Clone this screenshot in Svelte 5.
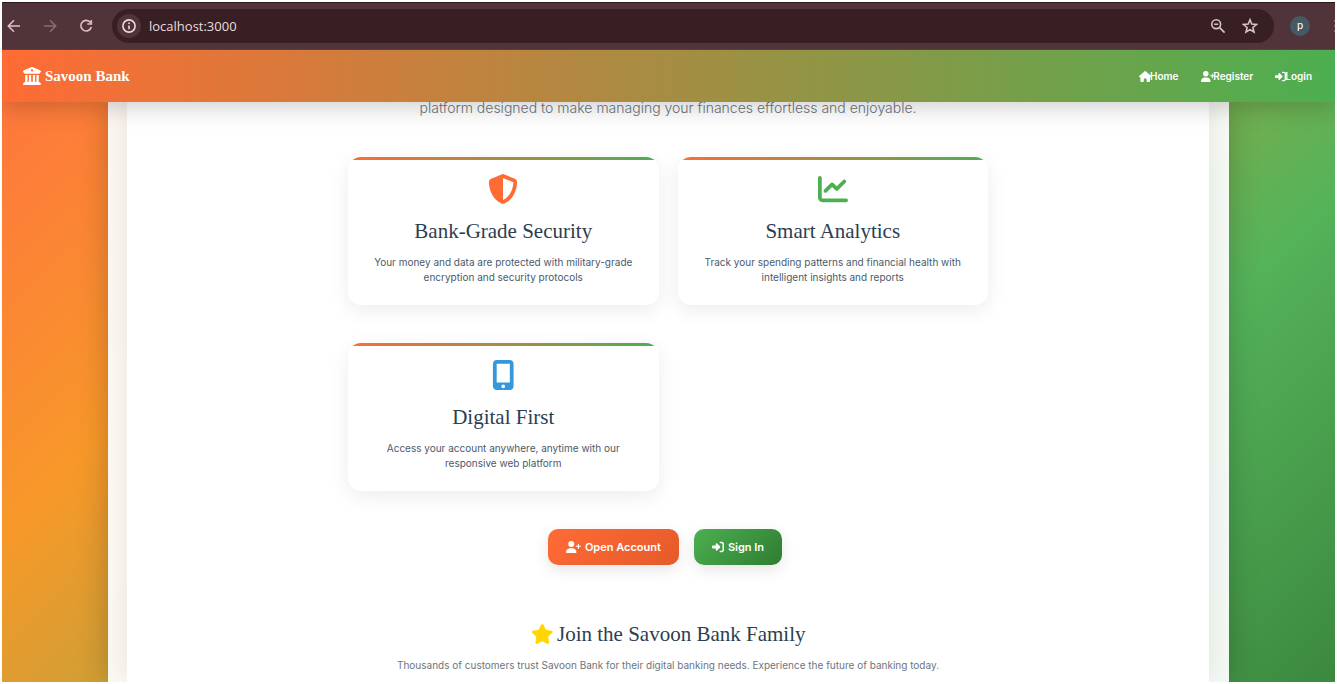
<script>
  const icons = {
    bank: { w: 512, d: 'M243.4 2.6l-224 96c-14 6-21.8 21-18.7 35.8S16.8 160 32 160v8c0 13.3 10.7 24 24 24H456c13.3 0 24-10.7 24-24v-8c15.2 0 28.3-10.7 31.3-25.6s-4.8-29.9-18.7-35.8l-224-96c-8-3.4-17.2-3.4-25.2 0zM128 224H64V420.3c-.6 .3-1.2 .7-1.8 1.1l-48 32c-11.7 7.8-17 22.4-12.9 35.9S17.9 512 32 512H480c14.1 0 26.5-9.2 30.6-22.7s-1.1-28.1-12.9-35.9l-48-32c-.6-.4-1.2-.7-1.8-1.1V224H384V416H344V224H280V416H232V224H168V416H128V224zM256 64a32 32 0 1 1 0 64 32 32 0 1 1 0-64z' },
    home: { w: 576, d: 'M575.8 255.5c0 18-15 32.1-32 32.1h-32l.7 160.2c0 2.7-.2 5.4-.5 8.1V472c0 22.1-17.9 40-40 40H456c-1.1 0-2.2 0-3.3-.1c-1.4 .1-2.8 .1-4.2 .1H416 392c-22.1 0-40-17.9-40-40V448 384c0-17.7-14.3-32-32-32H256c-17.7 0-32 14.3-32 32v64 24c0 22.1-17.9 40-40 40H160 128.1c-1.5 0-3-.1-4.5-.2c-1.2 .1-2.4 .2-3.6 .2H104c-22.1 0-40-17.9-40-40V360c0-.9 0-1.9 .1-2.8V287.6H32c-18 0-32-14-32-32.1c0-9 3-17 10-24L266.4 8c7-7 15-8 22-8s15 2 21 7L564.8 231.5c8 7 12 15 11 24z' },
    userPlus: { w: 640, d: 'M96 128a128 128 0 1 1 256 0A128 128 0 1 1 96 128zM0 482.3C0 383.8 79.8 304 178.3 304h91.4C368.2 304 448 383.8 448 482.3c0 16.4-13.3 29.7-29.7 29.7H29.7C13.3 512 0 498.7 0 482.3zM504 312V248H440c-13.3 0-24-10.7-24-24s10.7-24 24-24h64V136c0-13.3 10.7-24 24-24s24 10.7 24 24v64h64c13.3 0 24 10.7 24 24s-10.7 24-24 24H552v64c0 13.3-10.7 24-24 24s-24-10.7-24-24z' },
    login: { w: 512, d: 'M217.9 105.9L340.7 228.7c7.2 7.2 11.3 17.1 11.3 27.3s-4.1 20.1-11.3 27.3L217.9 406.1c-6.4 6.4-15 9.9-24 9.9c-18.7 0-33.9-15.2-33.9-33.9l0-62.1L32 320c-17.7 0-32-14.3-32-32l0-64c0-17.7 14.3-32 32-32l128 0 0-62.1c0-18.7 15.2-33.9 33.9-33.9c9 0 17.6 3.6 24 9.9zM352 416l64 0c17.7 0 32-14.3 32-32l0-256c0-17.7-14.3-32-32-32l-64 0c-17.7 0-32-14.3-32-32s14.3-32 32-32l64 0c53 0 96 43 96 96l0 256c0 53-43 96-96 96l-64 0c-17.7 0-32-14.3-32-32s14.3-32 32-32z' },
    shield: { w: 512, d: 'M256 0c4.6 0 9.2 1 13.4 2.9L457.7 82.8c22 9.3 38.4 31 38.3 57.2c-.5 99.2-41.3 280.7-213.6 363.2c-16.7 8-36.1 8-52.8 0C57.3 420.7 16.5 239.2 16 140c-.1-26.2 16.3-47.9 38.3-57.2L242.7 2.9C246.8 1 251.4 0 256 0zm0 66.8V444.8C394 378 431.1 230.1 432 141.4L256 66.8l0 0z' },
    chart: { w: 512, d: 'M64 64c0-17.7-14.3-32-32-32S0 46.3 0 64V400c0 44.2 35.8 80 80 80H480c17.7 0 32-14.3 32-32s-14.3-32-32-32H80c-8.8 0-16-7.2-16-16V64zm406.6 86.6c12.5-12.5 12.5-32.8 0-45.3s-32.8-12.5-45.3 0L320 210.7l-57.4-57.4c-12.5-12.5-32.8-12.5-45.3 0l-112 112c-12.5 12.5-12.5 32.8 0 45.3s32.8 12.5 45.3 0L240 221.3l57.4 57.4c12.5 12.5 32.8 12.5 45.3 0l128-128z' },
    mobile: { w: 384, d: 'M16 64C16 28.7 44.7 0 80 0H304c35.3 0 64 28.7 64 64V448c0 35.3-28.7 64-64 64H80c-35.3 0-64-28.7-64-64V64zM224 448a32 32 0 1 0 -64 0 32 32 0 1 0 64 0zM304 64H80V384H304V64z' },
    star: { w: 576, d: 'M316.9 18C311.6 7 300.4 0 288.1 0s-23.4 7-28.8 18L195 150.3 51.4 171.5c-12 1.8-22 10.2-25.7 21.7s-.7 24.2 7.9 32.7L137.8 329 113.2 474.7c-2 12 3 24.2 12.9 31.3s23 8 33.8 2.3l128.3-68.5 128.3 68.5c10.8 5.7 23.9 4.9 33.8-2.3s14.9-19.3 12.9-31.3L438.5 329 542.7 225.9c8.6-8.5 11.7-21.2 7.9-32.7s-13.7-19.9-25.7-21.7L381.2 150.3 316.9 18z' }
  };

  const links = [
    { icon: 'home', label: 'Home', href: '#home' },
    { icon: 'userPlus', label: 'Register', href: '#register' },
    { icon: 'login', label: 'Login', href: '#login' }
  ];

  const features = [
    { icon: 'shield', tone: 'orange', title: 'Bank-Grade Security', text: 'Your money and data are protected with military-grade encryption and security protocols' },
    { icon: 'chart', tone: 'green', title: 'Smart Analytics', text: 'Track your spending patterns and financial health with intelligent insights and reports' },
    { icon: 'mobile', tone: 'blue', title: 'Digital First', text: 'Access your account anywhere, anytime with our responsive web platform' }
  ];

  let address = $state('localhost:3000');
</script>

{#snippet icon(name)}
  <svg class="icon" viewBox="0 0 {icons[name].w} 512" aria-hidden="true"><path d={icons[name].d} /></svg>
{/snippet}

<div class="window">
  <div class="toolbar">
    <button class="tool" aria-label="Back">
      <svg viewBox="0 0 16 16"><path d="M14 8H2.5M8 2.3L2.3 8L8 13.7" /></svg>
    </button>
    <button class="tool dim" aria-label="Forward">
      <svg viewBox="0 0 16 16"><path d="M2 8H13.5M8 2.3L13.7 8L8 13.7" /></svg>
    </button>
    <button class="tool" aria-label="Reload">
      <svg viewBox="0 0 16 16"><path d="M12.4 4.5A5.3 5.3 0 1 0 13.3 9M13.3 2V6H9.3" /></svg>
    </button>
    <div class="omnibox">
      <button class="info" aria-label="Site information">
        <svg viewBox="0 0 16 16"><circle cx="8" cy="8" r="6.1" /><path d="M8 7.4V11.2M8 4.6V6" /></svg>
      </button>
      <input class="address" aria-label="Address" bind:value={address} />
      <button class="tool" aria-label="Zoom">
        <svg viewBox="0 0 16 16"><circle cx="6.2" cy="6.2" r="4.4" /><path d="M4.2 6.2H8.2M9.6 9.6L14.6 14.6" /></svg>
      </button>
      <button class="tool" aria-label="Bookmark">
        <svg viewBox="0 0 16 16"><path d="M8 1.8L9.8 6.1L14.4 6.5L10.9 9.5L12 14L8 11.6L4 14L5.1 9.5L1.6 6.5L6.2 6.1Z" /></svg>
      </button>
    </div>
    <button class="avatar" aria-label="Profile">p</button>
    <button class="more" aria-label="More"><i></i><i></i><i></i></button>
  </div>

  <div class="site">
    <header>
      <a class="brand" href="#home">{@render icon('bank')}Savoon Bank</a>
      <nav>
        {#each links as link}
          <a class={link.icon} href={link.href}>{@render icon(link.icon)}{link.label}</a>
        {/each}
      </nav>
    </header>

    <main>
      <div class="panel">
        <p class="lead">platform designed to make managing your finances effortless and enjoyable.</p>

        <section class="features">
          {#each features as f}
            <article class={f.tone}>
              {@render icon(f.icon)}
              <h2>{f.title}</h2>
              <p>{f.text}</p>
            </article>
          {/each}
        </section>

        <div class="actions">
          <button class="primary">{@render icon('userPlus')}Open Account</button>
          <button class="secondary">{@render icon('login')}Sign In</button>
        </div>

        <section class="join">
          <h2>{@render icon('star')}Join the Savoon Bank Family</h2>
          <p>Thousands of customers trust Savoon Bank for their digital banking needs. Experience the future of banking today.</p>
        </section>
      </div>
    </main>
  </div>
</div>

<style>
  :global(body) {
    margin: 0;
    background: #fff;
  }

  * {
    box-sizing: border-box;
  }

  .window {
    display: flex;
    flex-direction: column;
    height: 100vh;
    padding: 2px;
    overflow: hidden;
    font-family: Inter, 'Liberation Sans', sans-serif;
  }

  button {
    border: 0;
    padding: 0;
    background: none;
    font-family: inherit;
    cursor: pointer;
  }

  a {
    color: inherit;
    text-decoration: none;
  }

  h2,
  p {
    margin: 0;
  }

  .icon {
    display: block;
    flex: none;
    height: 12px;
    fill: currentColor;
  }

  /* Browser toolbar */
  .toolbar {
    display: flex;
    flex: none;
    align-items: center;
    height: 48px;
    padding-left: 4px;
    background: #50343a;
    border-top: 1px solid #2b191d;
    border-bottom: 1px solid #5a3e41;
    overflow: hidden;
  }

  .tool {
    display: flex;
    flex: none;
    width: 16px;
    height: 16px;
    margin-right: 20px;
    color: #e5bcc5;
  }

  .tool.dim {
    color: #8c6b72;
  }

  .tool svg,
  .info svg {
    width: 16px;
    height: 16px;
    fill: none;
    stroke: currentColor;
    stroke-width: 1.6;
  }

  .omnibox {
    display: flex;
    flex: 1;
    align-items: center;
    height: 34px;
    margin: 0 16px 0 -2px;
    padding-left: 5px;
    border-radius: 17px;
    background: #381f23;
  }

  .omnibox .tool {
    margin-right: 16px;
    color: #d8c2c5;
  }

  .info {
    display: flex;
    flex: none;
    align-items: center;
    justify-content: center;
    width: 24px;
    height: 24px;
    margin-right: 8px;
    border-radius: 50%;
    background: #50343a;
    color: #eadcde;
  }

  .address {
    flex: 1;
    min-width: 0;
    padding: 0;
    border: 0;
    outline: 0;
    background: none;
    color: #eadcde;
    font: 13px/20px 'Open Sans', sans-serif;
  }

  .avatar {
    flex: none;
    width: 20px;
    height: 20px;
    margin-right: 22px;
    border-radius: 50%;
    background: #455a64;
    color: #fff;
    font: 11px/18px Roboto, sans-serif;
  }

  .more {
    display: flex;
    flex: none;
    flex-direction: column;
    align-items: flex-end;
    gap: 3px;
    width: 3px;
  }

  .more i {
    width: 1px;
    height: 2px;
    background: #8c6b72;
  }

  /* Site */
  .site {
    display: flex;
    flex: 1;
    flex-direction: column;
    min-height: 0;
    overflow: hidden;
    background:
      linear-gradient(rgba(255, 255, 255, 0.05), rgba(255, 255, 255, 0.05)),
      linear-gradient(135deg, #ff6b35 0%, #f7931e 25%, #4caf50 75%, #2e7d32 103%);
  }

  header {
    position: relative;
    z-index: 1;
    display: flex;
    flex: none;
    align-items: center;
    justify-content: space-between;
    height: 52px;
    padding: 0 23px 0 21px;
    background: linear-gradient(90deg, #ff6b35, #4caf50);
    box-shadow: 0 5px 25px rgba(0, 0, 0, 0.2);
    color: #fff;
  }

  .brand {
    display: flex;
    align-items: center;
    gap: 4px;
    font: bold 15px/20px 'Liberation Serif', serif;
  }

  .brand .icon {
    height: 18px;
  }

  nav {
    display: flex;
    gap: 22px;
  }

  nav a {
    display: flex;
    align-items: center;
    font-size: 10px;
    font-weight: 600;
    line-height: 16px;
  }

  nav .icon {
    height: 11px;
    margin-right: -1px;
  }

  main {
    flex: 1;
    width: 100%;
    max-width: 1121px;
    min-height: 0;
    margin: 0 auto;
    padding: 0 20px 0 19px;
    background: rgba(255, 255, 255, 0.95);
    box-shadow: 0 0 30px rgba(0, 0, 0, 0.2);
  }

  .panel {
    display: flex;
    flex-direction: column;
    align-items: center;
    height: 100%;
    background: #fff;
    box-shadow: 0 0 30px rgba(0, 0, 0, 0.1);
    text-align: center;
  }

  .lead {
    flex: none;
    margin: -6px 0 37px;
    color: #6c757d;
    font-size: 14px;
    font-weight: 300;
    line-height: 24px;
  }

  .features {
    display: grid;
    grid-template-columns: 1fr 1fr;
    gap: 38px 19px;
    width: 100%;
    max-width: 640px;
  }

  article {
    position: relative;
    display: flex;
    flex-direction: column;
    align-items: center;
    padding: 17px 25px 20px;
    border-radius: 13px;
    background: #fff;
    box-shadow: 0 5px 20px rgba(0, 0, 0, 0.08);
    color: #4a5a6a;
  }

  article::before {
    content: '';
    position: absolute;
    inset: 0;
    border-radius: inherit;
    background: linear-gradient(90deg, #ff6b35, #4caf50) top / 100% 3px no-repeat;
  }

  article .icon {
    height: 30px;
  }

  .orange .icon {
    color: #ff6b35;
  }

  .green .icon {
    color: #4caf50;
  }

  .blue .icon {
    color: #3498db;
  }

  h2 {
    color: #2c3e50;
    font: 500 21px/26px 'Liberation Serif', serif;
  }

  article h2 {
    margin: 14px 0 11px;
  }

  article p {
    font-size: 10px;
    line-height: 15px;
  }

  .actions {
    display: flex;
    gap: 15px;
    margin: 38px 0 56px;
    padding-right: 6px;
  }

  .actions button {
    display: flex;
    align-items: center;
    gap: 4px;
    height: 36px;
    padding: 0 18px;
    border-radius: 10px;
    box-shadow: 0 5px 15px rgba(0, 0, 0, 0.1);
    color: #fff;
    font-size: 11px;
    font-weight: 600;
  }

  .primary {
    background: linear-gradient(135deg, #ff6b35, #e55a2b);
  }

  .secondary {
    background: linear-gradient(135deg, #4caf50, #2e7d32);
  }

  .join h2 {
    display: flex;
    align-items: center;
    justify-content: center;
    gap: 4px;
    margin-bottom: 11px;
  }

  .join .icon {
    height: 20px;
    color: #ffd700;
  }

  .join p {
    color: #6c757d;
    font-size: 10px;
    line-height: 15px;
  }
</style>
